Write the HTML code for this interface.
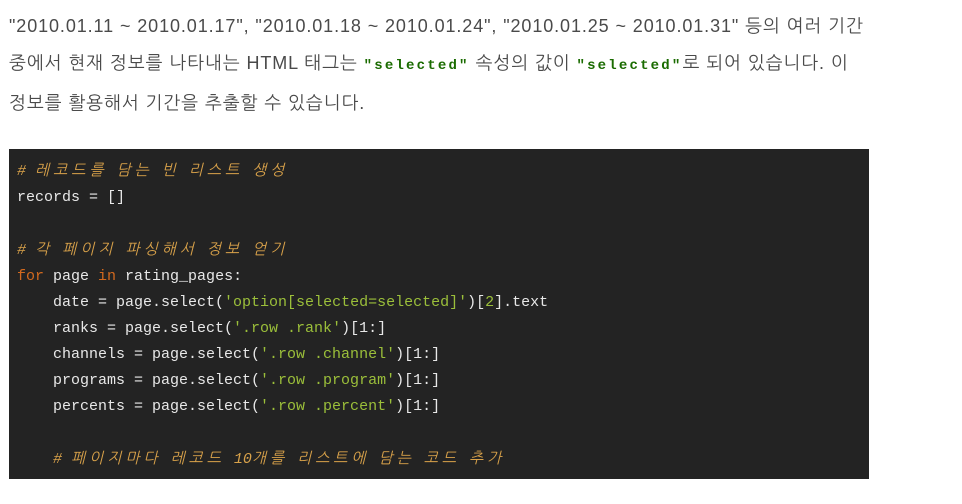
<!DOCTYPE html>
<html><head><meta charset="utf-8"><style>
body{margin:0;background:#fff;width:962px;height:504px;overflow:hidden}
p{margin:0;position:absolute;left:9px;top:8px;font-family:"Liberation Sans","NanumGothic","Noto Sans CJK KR",sans-serif;font-size:18px;letter-spacing:0.9px;line-height:37px;color:#4a4a4a;white-space:nowrap}
code{font-family:"Liberation Mono",monospace;font-weight:bold;color:#1a6b00;font-size:14px;letter-spacing:2.2px}
pre{position:absolute;left:9px;top:149px;width:860px;height:330px;margin:0;background:#232323;color:#e8e8e8;font-family:"Liberation Mono","NanumGothic",monospace;font-size:15px;line-height:26px;padding:9px 0 0 8px;box-sizing:border-box;overflow:hidden}
.c{color:#d9a24a;font-style:italic}.k{color:#d2691e}.s{color:#9bbf3a}.n{color:#9bbf3a}
.h{letter-spacing:4px;font-weight:normal;font-family:"NanumGothic","Noto Sans CJK KR",sans-serif}
</style></head><body>
<p>"2010.01.11 ~ 2010.01.17", "2010.01.18 ~ 2010.01.24", "2010.01.25 ~ 2010.01.31" 등의 여러 기간<br>중에서 현재 정보를 나타내는 HTML 태그는 <code>"selected"</code> 속성의 값이 <code>"selected"</code>로 되어 있습니다. 이<br>정보를 활용해서 기간을 추출할 수 있습니다.</p>
<pre><span class="c"># <b class="h">레코드를</b> <b class="h">담는</b> <b class="h">빈</b> <b class="h">리스트</b> <b class="h">생성</b></span>
records = []

<span class="c"># <b class="h">각</b> <b class="h">페이지</b> <b class="h">파싱해서</b> <b class="h">정보</b> <b class="h">얻기</b></span>
<span class="k">for</span> page <span class="k">in</span> rating_pages:
    date = page.select(<span class="s">'option[selected=selected]'</span>)[<span class="n">2</span>].text
    ranks = page.select(<span class="s">'.row .rank'</span>)[1:]
    channels = page.select(<span class="s">'.row .channel'</span>)[1:]
    programs = page.select(<span class="s">'.row .program'</span>)[1:]
    percents = page.select(<span class="s">'.row .percent'</span>)[1:]

    <span class="c"># <b class="h">페이지마다</b> <b class="h">레코드</b> 10<b class="h">개를</b> <b class="h">리스트에</b> <b class="h">담는</b> <b class="h">코드</b> <b class="h">추가</b></span>
</pre>
</body></html>
